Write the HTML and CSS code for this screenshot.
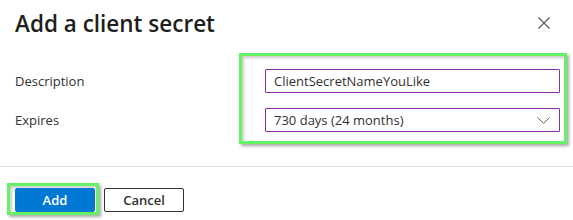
FILE: index.html
```html
<!DOCTYPE html>
<html lang="en">
<head>
    <meta charset="UTF-8">
    <title>Add a client secret</title>
    <link rel="stylesheet" href="styles.css">
</head>
<body>
    <div class="panel">
        <div class="panel-header">
            <h1>Add a client secret</h1>
            <button class="close" aria-label="Close">
                <svg width="12" height="12" viewBox="0 0 12 12">
                    <path d="M0.5 0.5 L11.5 11.5 M11.5 0.5 L0.5 11.5" stroke="#605e5c" stroke-width="1.2" fill="none"/>
                </svg>
            </button>
        </div>

        <div class="form">
            <div class="labels">
                <label for="desc">Description</label>
                <label>Expires</label>
            </div>
            <div class="highlight fields">
                <input id="desc" class="text-field" type="text" value="ClientSecretNameYouLike">
                <div class="select">
                    <span>730 days (24 months)</span>
                    <svg width="13" height="7" viewBox="0 0 13 7">
                        <path d="M0.5 0.5 L6.5 6.3 L12.5 0.5" stroke="#605e5c" stroke-width="1" fill="none"/>
                    </svg>
                </div>
            </div>
        </div>

        <div class="footer">
            <div class="highlight btn-wrap">
                <button class="btn primary">Add</button>
            </div>
            <button class="btn">Cancel</button>
        </div>
    </div>
</body>
</html>
```

FILE: styles.css
```css
/* Dialog styling */
html, body {
    margin: 0;
    padding: 0;
    background-color: #ffffff;
    font-family: "Open Sans", Arial, sans-serif;
    color: #323130;
}

.panel {
    width: 573px;
    height: 220px;
    overflow: hidden;
}

.panel-header {
    display: flex;
    justify-content: space-between;
    align-items: flex-start;
    padding: 8px 0 0 15px;
    height: 45px;
}

.panel-header h1 {
    margin: 0;
    font-size: 22.5px;
    font-weight: 600;
    line-height: 32px;
    color: #201f1e;
}

.close {
    border: none;
    background: none;
    padding: 0;
    margin: 9px 23px 0 0;
    width: 12px;
    height: 12px;
    display: flex;
}

/* Form rows */
.form {
    display: flex;
    align-items: flex-start;
}

.labels {
    width: 239px;
    padding-left: 15px;
    box-sizing: border-box;
    margin-top: 16px;
    display: flex;
    flex-direction: column;
    gap: 15px;
}

.labels label {
    font-size: 13px;
    line-height: 24px;
    height: 24px;
}

/* Green annotation frame */
.highlight {
    border: 3px solid #66f266;
    box-shadow: 2px 2px 3px rgba(0, 0, 0, 0.35), inset 2px 2px 3px rgba(0, 0, 0, 0.2);
}

.fields {
    width: 328px;
    box-sizing: border-box;
    padding: 13px 4px 9px 23px;
    display: flex;
    flex-direction: column;
    gap: 15px;
}

.text-field,
.select {
    height: 24px;
    box-sizing: border-box;
    border: 1px solid #8a2da5;
    border-radius: 1px;
    font-family: inherit;
    font-size: 13px;
    color: #323130;
    padding: 0 8px;
    margin: 0;
    width: 100%;
}

.select {
    display: flex;
    align-items: center;
    justify-content: space-between;
}

.select svg {
    margin-right: 1px;
}

/* Footer */
.footer {
    margin-top: 22px;
    border-top: 1px solid #e1dfdd;
    padding: 16px 0 0 7px;
    display: flex;
    align-items: flex-start;
}

.btn-wrap {
    padding: 2px 1px 0 5px;
    display: flex;
}

.btn {
    width: 80px;
    height: 24px;
    box-sizing: border-box;
    border: 1px solid #323130;
    border-radius: 2px;
    background: #ffffff;
    font-family: inherit;
    font-size: 13px;
    font-weight: 600;
    color: #323130;
    padding: 0;
    margin: 5px 0 0 5px;
}

.btn.primary {
    margin: 0;
    border-color: #0078d4;
    background: #0078d4;
    color: #ffffff;
}
```
